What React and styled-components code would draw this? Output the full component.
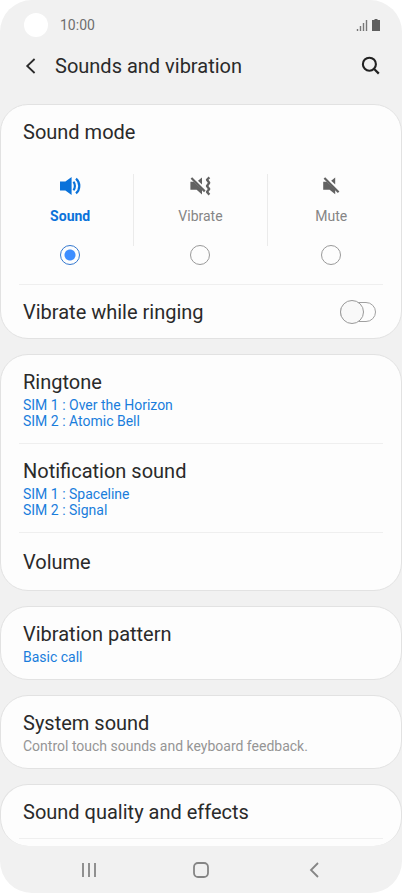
import React, { useState } from 'react'
import styled, { createGlobalStyle } from 'styled-components'

function SoundIcon() {
    return (
        <svg width="22" height="20" viewBox="0 0 22 20" aria-hidden="true">
            <path d="M1 5.6h5.4L12.6 1v18l-6.2-4.6H1z" fill="currentColor" />
            <path d="M14.4 5.8c2 2 2 6.4 0 8.4" fill="none" stroke="currentColor" strokeWidth="2.2" />
            <path d="M17 2.6c4.4 3.8 4.4 11 0 14.8" fill="none" stroke="currentColor" strokeWidth="2.2" />
        </svg>
    )
}

function VibrateIcon() {
    return (
        <svg width="22" height="20" viewBox="0 0 22 20" aria-hidden="true">
            <path d="M1.4 5.8h3.4l8.2 7.8v4.8l-5.4-4.6H1.4z" fill="currentColor" />
            <path d="M13 1.6v6.8L9 4.8z" fill="currentColor" />
            <path d="M2.4 2l13.4 13.4" stroke="currentColor" strokeWidth="2.2" />
            <path d="M20.4 1.4l-2.4 2.4 2.2 3-2.2 3.2 2.2 3-2.2 3 2.4 2.6" fill="none" stroke="currentColor" strokeWidth="2.3" strokeLinejoin="round" />
        </svg>
    )
}

function MuteIcon() {
    return (
        <svg width="18" height="20" viewBox="0 0 18 20" aria-hidden="true">
            <path d="M1.2 5.8h3.6l8.4 7.8v4.6l-5.6-4.4H1.2z" fill="currentColor" />
            <path d="M13.2 1.6v6.8L9.2 4.8z" fill="currentColor" />
            <path d="M2.4 2l14.2 14.2" stroke="currentColor" strokeWidth="2.2" />
        </svg>
    )
}

const modes = [
    { id: 'sound', label: 'Sound', icon: <SoundIcon /> },
    { id: 'vibrate', label: 'Vibrate', icon: <VibrateIcon /> },
    { id: 'mute', label: 'Mute', icon: <MuteIcon /> },
]

function StatusBar() {
    return (
        <Status>
            <Camera />
            <Time>10:00</Time>
            <svg width="25" height="14" viewBox="0 0 25 14" aria-hidden="true">
                <path d="M1.5 13v-2M4.5 13V8M7.5 13V5M10.5 13V2" stroke="#777" strokeWidth="1.4" />
                <path d="M18.5 1h3v1H24v10.5q0 .5-.5.5h-7q-.5 0-.5-.5V2h2.5z" fill="#5e5e5e" />
            </svg>
        </Status>
    )
}

function Header() {
    return (
        <Bar>
            <IconButton type="button" aria-label="Back">
                <svg width="12" height="18" viewBox="0 0 12 18">
                    <path d="M10.6 2L3.2 9l7.4 7" fill="none" stroke="#2b2b2b" strokeWidth="1.8" />
                </svg>
            </IconButton>
            <Title>Sounds and vibration</Title>
            <IconButton type="button" aria-label="Search">
                <svg width="20" height="20" viewBox="0 0 20 20">
                    <circle cx="8.4" cy="8.2" r="6.5" fill="none" stroke="#222" strokeWidth="2.1" />
                    <path d="M12.9 12.8l4.9 4.8" stroke="#222" strokeWidth="2.2" />
                </svg>
            </IconButton>
        </Bar>
    )
}

function SoundMode() {
    const [mode, setMode] = useState('sound')
    return (
        <ModeSet>
            <ModeTitle>Sound mode</ModeTitle>
            <Modes>
                {modes.map((m, i) => (
                    <React.Fragment key={m.id}>
                        {i > 0 && <Separator />}
                        <Mode $active={mode === m.id}>
                            <ModeIcon $active={mode === m.id}>{m.icon}</ModeIcon>
                            {m.label}
                            <Radio name="mode" value={m.id} checked={mode === m.id} onChange={() => setMode(m.id)} />
                        </Mode>
                    </React.Fragment>
                ))}
            </Modes>
        </ModeSet>
    )
}

function Setting({ title, lines = [], muted, tall }) {
    return (
        <Row type="button" $tall={tall}>
            <RowTitle>{title}</RowTitle>
            {lines.length > 0 && (
                <Details $muted={muted}>
                    {lines.map((line) => <span key={line}>{line}</span>)}
                </Details>
            )}
        </Row>
    )
}

export default function App() {
    return (
        <Screen>
            <GlobalStyle />
            <StatusBar />
            <Header />
            <List>
                <Card>
                    <SoundMode />
                    <Line />
                    <SwitchRow>
                        Vibrate while ringing
                        <Switch />
                    </SwitchRow>
                </Card>
                <Card>
                    <Setting title="Ringtone" lines={['SIM 1 : Over the Horizon', 'SIM 2 : Atomic Bell']} />
                    <Line />
                    <Setting title="Notification sound" lines={['SIM 1 : Spaceline', 'SIM 2 : Signal']} />
                    <Line />
                    <Setting title="Volume" tall />
                </Card>
                <Card>
                    <Setting title="Vibration pattern" lines={['Basic call']} />
                </Card>
                <Card>
                    <Setting title="System sound" lines={['Control touch sounds and keyboard feedback.']} muted />
                </Card>
                <LastCard>
                    <Setting title="Sound quality and effects" />
                    <Line />
                </LastCard>
            </List>
            <Nav>
                <NavButton type="button" aria-label="Recent apps">
                    <svg width="18" height="18" viewBox="0 0 18 18">
                        <path d="M3 2v14M9 2v14M15 2v14" stroke="#858585" strokeWidth="1.8" />
                    </svg>
                </NavButton>
                <NavButton type="button" aria-label="Home">
                    <svg width="18" height="18" viewBox="0 0 18 18">
                        <rect x="2" y="2" width="14" height="14" rx="4" fill="none" stroke="#858585" strokeWidth="1.8" />
                    </svg>
                </NavButton>
                <NavButton type="button" aria-label="Back">
                    <svg width="18" height="18" viewBox="0 0 18 18">
                        <path d="M14 2L7 9l7 7" fill="none" stroke="#858585" strokeWidth="1.8" />
                    </svg>
                </NavButton>
            </Nav>
        </Screen>
    )
}

const GlobalStyle = createGlobalStyle`
    * {
        box-sizing: border-box;
    }

    body {
        margin: 0;
        background: #fff;
        color: #2a2a2a;
        font-family: Roboto, "Liberation Sans", sans-serif;
    }

    button, input {
        margin: 0;
        font: inherit;
        color: inherit;
    }

    svg {
        display: block;
    }
`

const Screen = styled.div`
    display: flex;
    flex-direction: column;
    min-height: 100vh;
    background: #f1f1f1;
    border-radius: 32px;
    overflow: hidden;
`

const Status = styled.div`
    display: flex;
    align-items: center;
    padding: 13px 21px 0 24px;
`

const Camera = styled.span`
    width: 24px;
    height: 24px;
    border-radius: 50%;
    background: #fff;
`

const Time = styled.span`
    flex: 1;
    margin-left: 12px;
    font-size: 14px;
    line-height: 24px;
    color: #6e6e6e;
`

const Bar = styled.header`
    display: flex;
    align-items: center;
    height: 67px;
    padding: 0 21px 10px 24px;
`

const IconButton = styled.button`
    padding: 0;
    border: 0;
    background: none;
`

const Title = styled.h1`
    flex: 1;
    margin: 0 0 0 19px;
    font-size: 20px;
    line-height: 24px;
    font-weight: 400;
`

const List = styled.main`
    display: flex;
    flex-direction: column;
    gap: 15px;
`

const Card = styled.section`
    background: #fdfdfd;
    border: 1px solid #e2e2e2;
    border-radius: 28px;
    overflow: hidden;
`

const LastCard = styled(Card)`
    padding-bottom: 7px;
    border-bottom: 0;
`

const Line = styled.hr`
    height: 1px;
    margin: 0 18px;
    border: 0;
    background: #efefef;
`

const ModeSet = styled.fieldset`
    margin: 0;
    padding: 15px 6px 19px;
    border: 0;
`

const ModeTitle = styled.legend`
    float: left;
    width: 100%;
    padding: 0 16px;
    font-size: 20px;
    line-height: 24px;
`

const Modes = styled.div`
    clear: both;
    display: grid;
    grid-template-columns: 126fr 1px 132fr 1px 127fr;
    padding-top: 30px;
`

const Separator = styled.span`
    height: 72px;
    background: #ebebeb;
`

const Mode = styled.label`
    display: flex;
    flex-direction: column;
    align-items: center;
    font-size: 14px;
    line-height: 20px;
    font-weight: ${({ $active }) => ($active ? 700 : 400)};
    color: ${({ $active }) => ($active ? '#0a72da' : '#858585')};
`

const ModeIcon = styled.span`
    display: flex;
    align-items: center;
    height: 24px;
    margin-bottom: 8px;
    color: ${({ $active }) => ($active ? '#0a72da' : '#626262')};
`

const Radio = styled.input.attrs({ type: 'radio' })`
    appearance: none;
    width: 20px;
    height: 20px;
    margin-top: 19px;
    border: 1px solid #999;
    border-radius: 50%;

    &:checked {
        border-color: #3478cf;
        background: radial-gradient(circle, #3d8dff 5px, transparent 6px);
    }
`

const SwitchRow = styled.label`
    display: flex;
    align-items: center;
    justify-content: space-between;
    height: 53px;
    padding: 0 25px 0 22px;
    font-size: 20px;
    line-height: 24px;
`

const Switch = styled.input.attrs({ type: 'checkbox', role: 'switch' })`
    appearance: none;
    display: flex;
    align-items: center;
    width: 36px;
    height: 20px;
    border: 1px solid #a0a0a0;
    border-radius: 10px;

    &::before {
        content: '';
        flex: none;
        width: 22px;
        height: 22px;
        margin-left: -1px;
        border: 1px solid #999;
        border-radius: 50%;
        background: #f9f9f9;
    }

    &:checked {
        justify-content: flex-end;
        background: #3d8dff;
    }
`

const Row = styled.button`
    display: block;
    width: 100%;
    padding: ${({ $tall }) => ($tall ? '17px 22px 16px' : '15px 22px 14px')};
    border: 0;
    background: none;
    text-align: left;
`

const RowTitle = styled.span`
    display: block;
    font-size: 20px;
    line-height: 24px;
`

const Details = styled.span`
    display: flex;
    flex-direction: column;
    margin-top: 3px;
    font-size: 14px;
    line-height: 16px;
    color: ${({ $muted }) => ($muted ? '#959595' : '#1a7ddc')};
`

const Nav = styled.nav`
    display: grid;
    grid-template-columns: repeat(3, 112px);
    justify-content: center;
    padding: 15px 0 14px;
`

const NavButton = styled.button`
    display: flex;
    justify-content: center;
    padding: 0;
    border: 0;
    background: none;
`
